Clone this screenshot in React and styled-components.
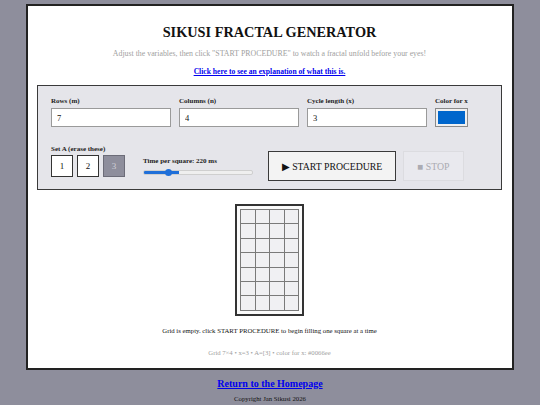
import React from 'react';
import styled, { createGlobalStyle } from 'styled-components';

const GlobalStyle = createGlobalStyle`
  html, body {
    margin: 0;
    padding: 0;
    background: #8e8e9c;
    font-family: "Liberation Serif", "Times New Roman", serif;
    color: #111;
  }
`;

const Page = styled.div`
  display: flex;
  flex-direction: column;
  align-items: center;
  padding-top: 4px;
`;

const Card = styled.main`
  box-sizing: border-box;
  width: 488px;
  background: #fff;
  border: 2px solid #222;
  padding: 17px 10px 10px 9px;
  display: flex;
  flex-direction: column;
  align-items: center;
`;

const Title = styled.h1`
  margin: 0;
  font-size: 14.3px;
  line-height: 18px;
  font-weight: 700;
`;

const Subtitle = styled.p`
  margin: 8px 0 0;
  font-size: 7.85px;
  line-height: 10px;
  color: #a0a0a0;
`;

const ExplainLink = styled.a`
  margin-top: 8px;
  font-size: 7.6px;
  line-height: 10px;
  font-weight: 700;
  color: #0000ee;
  text-decoration: underline;
`;

const Panel = styled.section`
  box-sizing: border-box;
  align-self: stretch;
  margin: 8px 0 0;
  background: #e5e5ea;
  border: 1.5px solid #3a3a3a;
  padding: 11px 13px 8px;
`;

const FieldRow = styled.div`
  display: grid;
  grid-template-columns: 120px 120px 120px 1fr;
  column-gap: 8px;
`;

const Field = styled.label`
  display: flex;
  flex-direction: column;
  gap: 3px;
`;

const Label = styled.span`
  font-size: 7px;
  line-height: 8px;
  font-weight: 700;
  color: #222;
`;

const TextInput = styled.input`
  box-sizing: border-box;
  width: 100%;
  height: 19px;
  border: 1px solid #9a9a9a;
  background: #fff;
  padding: 0 5px;
  font-family: inherit;
  font-size: 8.5px;
  color: #111;
  outline: none;
`;

const ColorInput = styled.input`
  box-sizing: border-box;
  width: 33px;
  height: 19px;
  padding: 0;
  border: 1px solid #8a8a8a;
  background: #f0f0f0;
  -webkit-appearance: none;
  appearance: none;
  cursor: pointer;
  &::-webkit-color-swatch-wrapper {
    padding: 2px;
  }
  &::-webkit-color-swatch {
    border: none;
  }
`;

const ControlRow = styled.div`
  display: flex;
  align-items: center;
  margin-top: 24px;
`;

const SetGroup = styled.div`
  display: flex;
  flex-direction: column;
  gap: 2px;
  margin-top: -10px;
`;

const SetButtons = styled.div`
  display: flex;
  gap: 4px;
`;

const SetButton = styled.button`
  box-sizing: border-box;
  width: 22px;
  height: 22px;
  padding: 0;
  border: 1px solid ${({ selected }) => (selected ? '#6c6c78' : '#333')};
  background: ${({ selected }) => (selected ? '#8e8e9c' : '#fff')};
  color: ${({ selected }) => (selected ? '#d0d0d8' : '#111')};
  font-family: inherit;
  font-size: 9px;
  cursor: pointer;
`;

const SpeedGroup = styled.div`
  display: flex;
  flex-direction: column;
  gap: 5px;
  margin-left: 18px;
`;

const Slider = styled.input`
  -webkit-appearance: none;
  appearance: none;
  width: 108px;
  height: 3px;
  margin: 0;
  border-radius: 2px;
  background: linear-gradient(to right, #1f6fd9 0%, #1f6fd9 32%, #efefef 32%, #efefef 100%);
  border: 0.5px solid #cfcfcf;
  &::-webkit-slider-thumb {
    -webkit-appearance: none;
    width: 7px;
    height: 7px;
    border-radius: 50%;
    background: #1f6fd9;
    border: none;
  }
`;

const StartButton = styled.button`
  box-sizing: border-box;
  height: 30px;
  width: 128px;
  margin-left: 15px;
  border: 1.5px solid #3a3a3a;
  background: #f3f3f3;
  color: #111;
  font-family: inherit;
  font-size: 9.8px;
  padding: 0;
  cursor: pointer;
`;

const StopButton = styled.button`
  box-sizing: border-box;
  height: 30px;
  width: 61px;
  margin-left: 7px;
  border: 1px solid #dcdce0;
  background: #e9e9ee;
  color: #ababb2;
  font-family: inherit;
  font-size: 9.8px;
  padding: 0;
`;

const Board = styled.div`
  margin-top: 14px;
  border: 2px solid #333;
  padding: 3px;
  background: #fafafa;
`;

const Cells = styled.div`
  display: grid;
  grid-template-columns: repeat(${({ cols }) => cols}, 13.5px);
  grid-auto-rows: 13.4px;
  gap: 1px;
  padding: 1px;
  background: #7a7a7a;
`;

const Cell = styled.div`
  background: ${({ filled }) => filled || '#f0f0f3'};
`;

const Status = styled.p`
  margin: 10px 0 0;
  font-size: 6.75px;
  line-height: 10px;
  color: #111;
`;

const Info = styled.p`
  margin: 12px 0 0;
  font-size: 6.7px;
  line-height: 10px;
  color: #a0a0a0;
`;

const Footer = styled.footer`
  display: flex;
  flex-direction: column;
  align-items: center;
  padding-top: 7px;
`;

const HomeLink = styled.a`
  font-size: 10px;
  line-height: 13px;
  font-weight: 700;
  color: #0000ee;
  text-decoration: underline;
`;

const Copyright = styled.p`
  margin: 5px 0 0;
  font-size: 6.75px;
  line-height: 8px;
  color: #111;
`;

const rows = 7;
const cols = 4;
const setA = [1, 2, 3];
const selectedA = [3];

export default function App() {
  return (
    <>
      <GlobalStyle />
      <Page>
        <Card>
          <Title>SIKUSI FRACTAL GENERATOR</Title>
          <Subtitle>
            Adjust the variables, then click "START PROCEDURE" to watch a fractal unfold before your eyes!
          </Subtitle>
          <ExplainLink href="#explanation">Click here to see an explanation of what this is.</ExplainLink>

          <Panel>
            <FieldRow>
              <Field>
                <Label>Rows (m)</Label>
                <TextInput defaultValue="7" />
              </Field>
              <Field>
                <Label>Columns (n)</Label>
                <TextInput defaultValue="4" />
              </Field>
              <Field>
                <Label>Cycle length (x)</Label>
                <TextInput defaultValue="3" />
              </Field>
              <Field>
                <Label>Color for x</Label>
                <ColorInput type="color" defaultValue="#0066cc" />
              </Field>
            </FieldRow>

            <ControlRow>
              <SetGroup>
                <Label>Set A (erase these)</Label>
                <SetButtons>
                  {setA.map((n) => (
                    <SetButton key={n} selected={selectedA.includes(n)}>
                      {n}
                    </SetButton>
                  ))}
                </SetButtons>
              </SetGroup>
              <SpeedGroup>
                <Label>Time per square: 220 ms</Label>
                <Slider type="range" min="20" max="1000" defaultValue="220" />
              </SpeedGroup>
              <StartButton>▶ START PROCEDURE</StartButton>
              <StopButton disabled>■ STOP</StopButton>
            </ControlRow>
          </Panel>

          <Board>
            <Cells cols={cols}>
              {Array.from({ length: rows * cols }, (_, i) => (
                <Cell key={i} />
              ))}
            </Cells>
          </Board>

          <Status>Grid is empty. click START PROCEDURE to begin filling one square at a time</Status>
          <Info>Grid 7×4 • x=3 • A=[3] • color for x: #0066ee</Info>
        </Card>

        <Footer>
          <HomeLink href="#home">Return to the Homepage</HomeLink>
          <Copyright>Copyright Jan Sikusi 2026</Copyright>
        </Footer>
      </Page>
    </>
  );
}
